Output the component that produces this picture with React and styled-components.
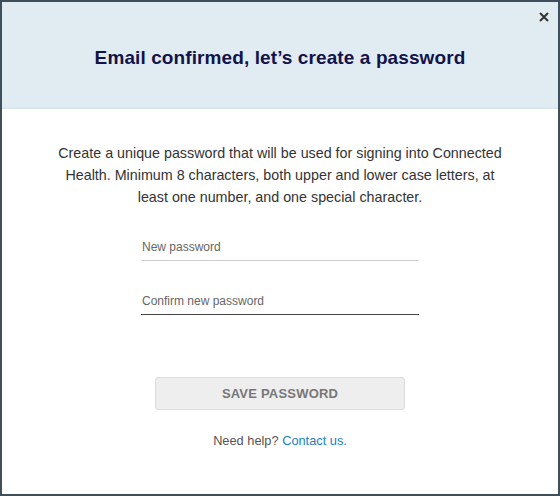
import styled, { createGlobalStyle } from 'styled-components'

const Global = createGlobalStyle`
  html, body {
    margin: 0;
    padding: 0;
    background: #ffffff;
  }
  * { box-sizing: border-box; }
`

const Modal = styled.div`
  width: 560px;
  height: 496px;
  border: 2px solid #3f505c;
  background: #fff;
  font-family: "Liberation Sans", Arial, sans-serif;
  display: flex;
  flex-direction: column;
`

const Header = styled.div`
  position: relative;
  height: 107px;
  padding-top: 6px;
  background: #e0ecf1;
  border-bottom: 2px solid #dae6eb;
  display: flex;
  align-items: center;
  justify-content: center;
`

const Title = styled.h1`
  margin: 0;
  font-size: 19px;
  font-weight: bold;
  color: #13134a;
  letter-spacing: 0.1px;
`

const Close = styled.button`
  position: absolute;
  top: 5px;
  right: 4px;
  width: 20px;
  height: 20px;
  padding: 0;
  border: none;
  background: transparent;
  display: flex;
  align-items: center;
  justify-content: center;
  cursor: pointer;
`

const Body = styled.div`
  display: flex;
  flex-direction: column;
  align-items: center;
  padding-top: 33px;
`

const Intro = styled.p`
  margin: 0;
  width: 456px;
  text-align: center;
  font-size: 14.3px;
  line-height: 22px;
  color: #333;
`

const Form = styled.div`
  width: 278px;
  margin-top: 32px;
  display: flex;
  flex-direction: column;
  gap: 33px;
`

const Field = styled.label`
  display: block;
  font-size: 12px;
  color: #666;
  padding-left: 1px;
  padding-bottom: 6px;
  border-bottom: ${p => (p.$active ? '1.5px solid #444' : '1px solid #ccc')};
`

const SaveButton = styled.button`
  margin-top: 62px;
  width: 250px;
  height: 33px;
  background: #eeeeee;
  border: 1px solid #dcdcdc;
  border-radius: 3px;
  font-family: inherit;
  font-size: 13px;
  font-weight: bold;
  color: #777;
  letter-spacing: 0.2px;
`

const Help = styled.p`
  margin: 23px 0 0;
  font-size: 12.8px;
  color: #555;

  a {
    color: #1b80c4;
    text-decoration: none;
  }
`

export default function App() {
  return (
    <>
      <Global />
      <Modal>
        <Header>
          <Title>Email confirmed, let’s create a password</Title>
          <Close aria-label="close">
            <svg width="10" height="10" viewBox="0 0 10 10">
              <path d="M1 1L9 9M9 1L1 9" stroke="#333" strokeWidth="2" />
            </svg>
          </Close>
        </Header>
        <Body>
          <Intro>
            Create a unique password that will be used for signing into Connected
            Health. Minimum 8 characters, both upper and lower case letters, at
            least one number, and one special character.
          </Intro>
          <Form>
            <Field>New password</Field>
            <Field $active>Confirm new password</Field>
          </Form>
          <SaveButton>SAVE PASSWORD</SaveButton>
          <Help>
            Need help? <a href="#">Contact us.</a>
          </Help>
        </Body>
      </Modal>
    </>
  )
}
